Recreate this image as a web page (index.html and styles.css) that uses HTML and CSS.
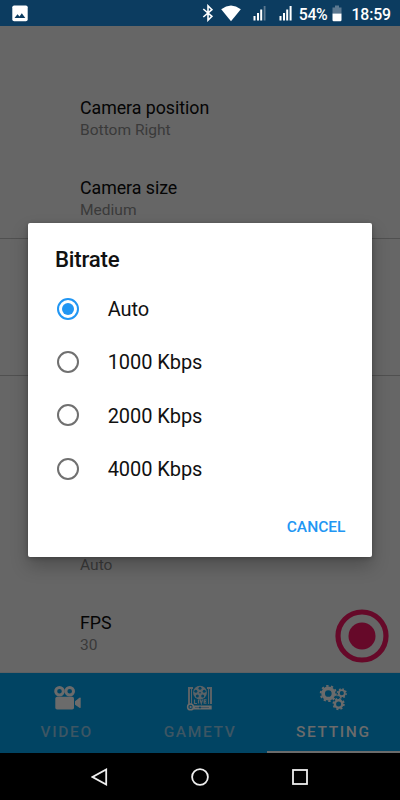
FILE: index.html
```html
<!DOCTYPE html>
<html lang="en">
<head>
<meta charset="utf-8">
<title>Settings</title>
<link rel="stylesheet" href="styles.css">
</head>
<body>
<div class="phone">
  <header class="status">
    <svg class="picture" width="16" height="17" viewBox="0 0 16 17"><rect x=".3" y=".5" width="15.4" height="15.8" rx="1.8" fill="#fff"/><path d="M2.5 13l3-3.8 2 2.2 2.3-3.2 3.5 4.8z" fill="#0c3c60"/></svg>
    <div class="indicators">
      <svg class="bt" width="12" height="18" viewBox="0 0 12 18"><path d="M1.3 5l8.6 7.4L6 16.2V1.8l3.9 3.8L1.3 13" fill="none" stroke="#fff" stroke-width="1.6"/></svg>
      <svg class="wifi" width="20" height="17" viewBox="0 0 20 17"><path d="M.2 4.2Q10-3.2 19.8 4.2L10 16.2z" fill="#fff"/></svg>
      <svg class="signal" width="14" height="16" viewBox="0 0 14 16"><path d="M.5 11h2v4.5h-2zM4 8h2v7.500h-2zM7.200 4.500h2v11h-2z" fill="#fff"/><path d="M10.700 1h1.800v14.500h-1.800z" fill="#5c7890"/></svg>
      <svg class="signal two" width="14" height="16" viewBox="0 0 14 16"><path d="M.5 11h2v4.500h-2zM4 8h2v7.500h-2zM7.200 4.500h2v11h-2zM10.600 1h2v14.500h-2z" fill="#fff"/></svg>
      <span class="percent">54%</span>
      <svg class="battery" width="10" height="17" viewBox="0 0 10 17"><path d="M3 .5h4v2h2.500v6H.5v-6H3z" fill="#5c7890"/><path d="M.5 8.500h9V15q0 1.200-1.200 1.200H1.700Q.5 16.200.5 15z" fill="#fff"/></svg>
      <span class="clock">18:59</span>
    </div>
  </header>

  <main class="settings">
    <section class="group first">
      <div class="pref"><div class="name">Camera position</div><div class="value">Bottom Right</div></div>
      <div class="pref"><div class="name">Camera size</div><div class="value">Medium</div></div>
    </section>
    <section class="group middle"></section>
    <section class="group last">
      <div class="pref"><div class="name">Bitrate</div><div class="value">Auto</div></div>
      <div class="pref"><div class="name">FPS</div><div class="value">30</div></div>
    </section>
    <svg class="record" width="54" height="54" viewBox="0 0 54 54"><circle cx="27" cy="27" r="24" fill="none" stroke="#660929" stroke-width="5.200"/><circle cx="27" cy="27" r="13.500" fill="#660929"/></svg>
  </main>

  <nav class="tabs">
    <div class="tab">
      <svg width="28" height="28" viewBox="0 0 28 28"><g fill="none" stroke="#6b6b6b" stroke-width="3"><circle cx="6.500" cy="7.200" r="3.800"/><circle cx="16.700" cy="7.200" r="3.800"/></g><rect x="2.300" y="12.800" width="18.700" height="12.700" rx="1.800" fill="#6b6b6b"/><path d="M22 17.300l4.400-3.500q1.300-.7 1.300.5v9q0 1.200-1.300.5L22 20.800z" fill="#6b6b6b"/></svg>
      <span>VIDEO</span>
    </div>
    <div class="tab">
      <svg width="28" height="28" viewBox="0 0 28 28"><path d="M7 4H3v19M21 4h4v16" fill="none" stroke="#5b6266" stroke-width="2"/><path d="M5.500 4v16M22.600 4v16" stroke="#5b6266"/><circle cx="14" cy="8.700" r="6.900" fill="#5b6266"/><g fill="#014463"><circle cx="14" cy="4.300" r="1.500"/><circle cx="18.200" cy="7.200" r="1.500"/><circle cx="16.700" cy="12" r="1.500"/><circle cx="11.300" cy="12" r="1.500"/><circle cx="9.800" cy="7.200" r="1.500"/><circle cx="14" cy="8.800" r=".8"/></g><path d="M8.500 15.500v4h2.500m1.500-4v4m1.500-4l1.300 4 1.200-4m4 .3h-2.300v3.400h2.300M18.200 17.500h2" fill="none" stroke="#5b6266" stroke-width="1.200"/><rect x="7" y="21.500" width="18.700" height="4" fill="#6b6b6b"/><path d="M9 23.500h4.500m1.500 0h8" stroke="#344f5e" stroke-width=".7"/><circle cx="14" cy="23.500" r="1" fill="#014463"/><circle cx="4.500" cy="22.900" r="2.900" fill="#014463" stroke="#6b6b6b" stroke-width="1.500"/><path d="M3.700 21.400l2.500 1.500-2.500 1.500z" fill="#6b6b6b"/></svg>
      <span>GAMETV</span>
    </div>
    <div class="tab active">
      <svg width="28" height="28" viewBox="0 0 28 28" fill="none" stroke="#6b6b6b"><circle cx="9.300" cy="9.500" r="5.200" stroke-width="3.700"/><circle cx="9.300" cy="9.500" r="7.600" stroke-width="1.900" stroke-dasharray="2.390 2.385"/><circle cx="22.800" cy="9.200" r="3" stroke-width="1.800"/><circle cx="22.800" cy="9.200" r="4.300" stroke-width="1.600" stroke-dasharray="1.690 1.687"/><circle cx="19.600" cy="20" r="3.700" stroke-width="2.400"/><circle cx="19.600" cy="20" r="5.300" stroke-width="1.700" stroke-dasharray="2.080 2.082"/></svg>
      <span>SETTING</span>
    </div>
  </nav>

  <footer class="navbar">
    <svg width="18" height="18" viewBox="0 0 18 18"><path d="M15.200 1.500v15L1.600 9z"/></svg>
    <svg width="18" height="18" viewBox="0 0 18 18"><circle cx="9" cy="9" r="7.900"/></svg>
    <svg width="18" height="18" viewBox="0 0 18 18"><rect x="2" y="2" width="14" height="14"/></svg>
  </footer>

  <div class="dialog" role="dialog">
    <h1>Bitrate</h1>
    <div class="option selected"><i class="radio"></i><span>Auto</span></div>
    <div class="option"><i class="radio"></i><span>1000 Kbps</span></div>
    <div class="option"><i class="radio"></i><span>2000 Kbps</span></div>
    <div class="option"><i class="radio"></i><span>4000 Kbps</span></div>
    <div class="actions"><span class="cancel">CANCEL</span></div>
  </div>
</div>
</body>
</html>
```
FILE: styles.css
```css
* { box-sizing: border-box; }
body { margin: 0; font-family: Roboto, "Liberation Sans", sans-serif; }
svg { display: block; flex: none; }
.phone { position: relative; width: 400px; height: 800px; overflow: hidden; display: flex; flex-direction: column; background: #000; }

.status { height: 26px; flex: none; display: flex; justify-content: space-between; align-items: center; background: #0c3c60; color: #fff; padding: 0 9px 0 12px; font-size: 15.800px; font-weight: 500; line-height: 24px; }
.indicators { display: flex; align-items: center; }
.wifi { margin-left: 7px; }
.signal { margin-left: 12px; }
.signal.two { margin-left: 12px; }
.percent { margin-left: 6px; padding-top: 3px; letter-spacing: -.3px; }
.battery { margin-left: 5px; }
.clock { margin-left: 9px; padding-top: 3px; letter-spacing: -.1px; }

.settings { position: relative; height: 647px; flex: none; background: #666; display: flex; flex-direction: column; border-bottom: 1px solid #5d6063; }
.group { flex: none; border-bottom: 1px solid #505050; }
.first { height: 213px; padding-top: 52px; }
.middle { height: 137px; }
.last { height: 296px; overflow: hidden; border: 0; padding-top: 137px; }
.pref { height: 80.400px; padding: 17.500px 16px 0 80px; }
.name { font-size: 17.780px; line-height: 24px; color: #050505; letter-spacing: -.03px; }
.value { font-size: 15.560px; line-height: 21px; color: #3a3a3a; }
.record { position: absolute; right: 11px; bottom: 9.500px; }

.tabs { height: 80px; flex: none; display: grid; grid-template-columns: repeat(3, 1fr); background: #014463; }
.tab { display: flex; flex-direction: column; align-items: center; padding-top: 11px; color: #3d5663; font-size: 15.560px; font-weight: 500; letter-spacing: 1.600px; }
.tab span { line-height: 20px; margin-top: 10px; }
.tab.active { color: #6b6b6b; border-bottom: 2px solid #6b6b6b; }

.navbar { height: 47px; display: flex; justify-content: center; align-items: center; gap: 82px; }
.navbar svg { fill: none; stroke: #eee; stroke-width: 1.800; }

.dialog { position: absolute; left: 28px; top: 223px; width: 344px; height: 334px; background: #fff; border-radius: 2px; box-shadow: 0 9px 18px rgba(0,0,0,.24), 0 1px 4px rgba(0,0,0,.25); color: #111; }
.dialog h1 { margin: 0; padding: 22px 27px 0; height: 59px; font-size: 22.220px; line-height: 28px; font-weight: 500; letter-spacing: -.2px; }
.option { height: 53.300px; display: flex; align-items: center; gap: 29px; padding-left: 28.700px; font-size: 20px; letter-spacing: -.07px; }
.option span { padding-top: 1px; }
.radio { width: 22px; height: 22px; border: 2px solid #707070; border-radius: 50%; flex: none; display: flex; align-items: center; justify-content: center; }
.selected .radio { border-color: #2196f3; }
.selected .radio::after { content: ""; width: 12px; height: 12px; border-radius: 50%; background: #2196f3; }
.actions { display: flex; justify-content: flex-end; padding: 22px 26.500px 0; }
.cancel { color: #2196f3; font-size: 15.560px; font-weight: 500; line-height: 20px; }
```
